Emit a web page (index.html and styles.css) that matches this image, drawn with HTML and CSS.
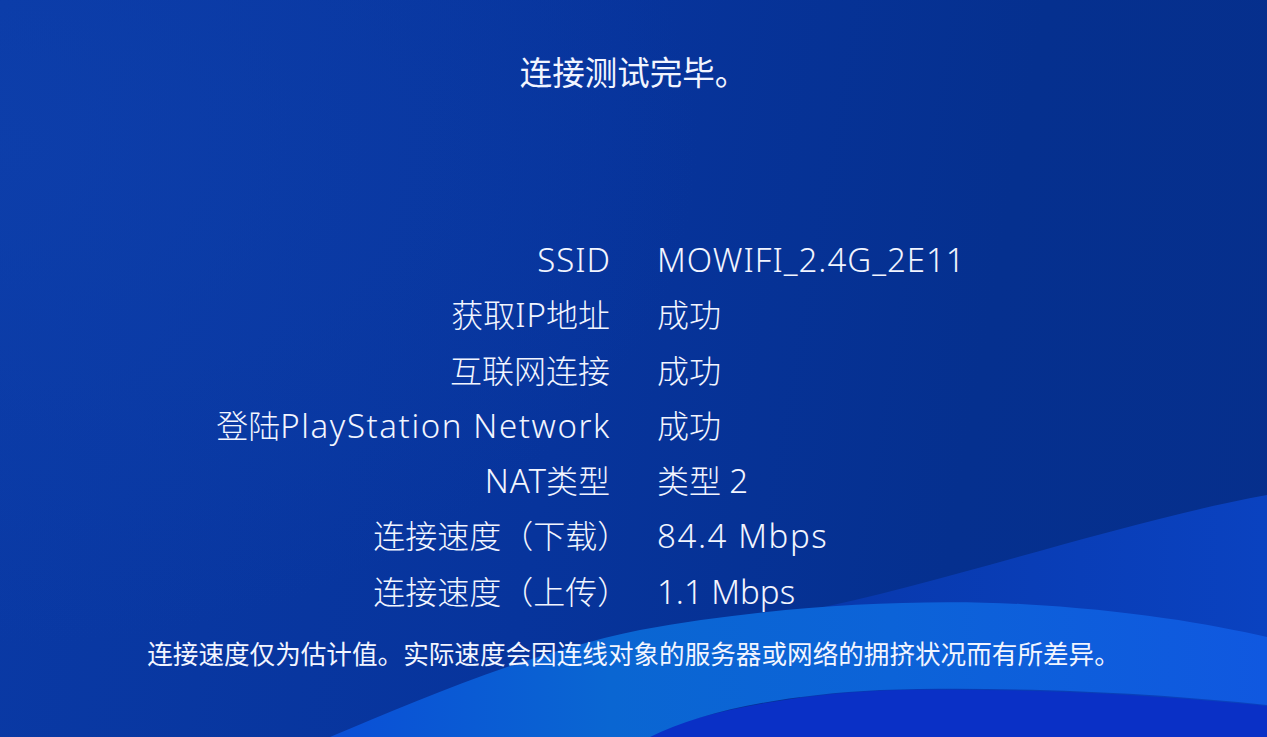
FILE: index.html
```html
<!DOCTYPE html>
<html lang="zh-CN">
<head>
<meta charset="utf-8">
<title>连接测试</title>
<link rel="stylesheet" href="styles.css">
</head>
<body>
<div class="screen">
  <svg class="bg" viewBox="0 0 1267 737" preserveAspectRatio="none" aria-hidden="true">
    <defs>
      <linearGradient id="mid" x1="0" y1="0" x2="1" y2="0">
        <stop offset="0" stop-color="#0838ac"/>
        <stop offset="1" stop-color="#0a42c0"/>
      </linearGradient>
      <linearGradient id="light" x1="0" y1="0" x2="1" y2="0">
        <stop offset="0" stop-color="#0a4fd6"/>
        <stop offset="0.3" stop-color="#0a66d2"/>
        <stop offset="0.6" stop-color="#0c63d8"/>
        <stop offset="1" stop-color="#1058e0"/>
      </linearGradient>
    </defs>
    <path d="M800 612 C950 582 1120 522 1267 495 L1267 737 L800 737 Z" fill="url(#mid)"/>
    <path d="M640 737 C720 705 820 692 900 690 C1030 688 1160 695 1267 706 L1267 737 Z" fill="#0a30c6"/>
    <path d="M330 737 C420 700 520 655 640 630 C760 608 900 598 1020 604 C1130 610 1210 624 1267 637 L1267 705 C1150 692 1000 686 880 690 C780 695 700 712 650 737 Z" fill="url(#light)"/>
  </svg>

  <main class="content">
    <h1 class="title">连接测试完毕。</h1>
    <dl class="results">
      <dt><span class="en">SSID</span></dt><dd><span class="en">MOWIFI_2.4G_2E11</span></dd>
      <dt>获取<span class="en">IP</span>地址</dt><dd>成功</dd>
      <dt>互联网连接</dt><dd>成功</dd>
      <dt>登陆<span class="en wide">PlayStation Network</span></dt><dd>成功</dd>
      <dt><span class="en">NAT</span>类型</dt><dd>类型 <span class="en">2</span></dd>
      <dt>连接速度（下载<span class="close">）</span></dt><dd><span class="en wide">84.4 Mbps</span></dd>
      <dt>连接速度（上传<span class="close">）</span></dt><dd><span class="en narrow">1.1 Mbps</span></dd>
    </dl>
    <p class="note">连接速度仅为估计值。实际速度会因连线对象的服务器或网络的拥挤状况而有所差异。</p>
  </main>
</div>
</body>
</html>
```

FILE: styles.css
```css
* { box-sizing: border-box; }

html, body {
  margin: 0;
  padding: 0;
  width: 1267px;
  height: 737px;
  overflow: hidden;
}

body {
  font-family: "Noto Sans", "Noto Sans CJK SC", sans-serif;
  color: #f2f5ff;
  background: #07349c;
}

.screen {
  position: relative;
  width: 1267px;
  height: 737px;
  overflow: hidden;
  background:
    radial-gradient(ellipse 700px 500px at 0% 20%, rgba(14, 64, 172, 0.7), rgba(14, 64, 172, 0) 100%),
    linear-gradient(100deg, #0a3aa6 0%, #07349c 45%, #05308f 75%, #062f8c 100%);
}

.bg {
  position: absolute;
  left: 0;
  top: 0;
  width: 1267px;
  height: 737px;
  z-index: 0;
}

.content {
  position: relative;
  z-index: 1;
  display: flex;
  flex-direction: column;
  align-items: center;
}

.title {
  margin: 53px 0 0;
  font-size: 32.5px;
  line-height: 40px;
  font-weight: 400;
  text-align: center;
}

.results {
  align-self: stretch;
  margin: 139px 0 0;
  display: grid;
  grid-template-columns: 610px 1fr;
  column-gap: 47px;
  font-size: 32px;
  line-height: 55.3px;
  font-weight: 300;
}

.results dt {
  text-align: right;
  white-space: nowrap;
}

.results dd {
  margin: 0;
  white-space: nowrap;
}

.en {
  font-size: 33px;
  letter-spacing: 1px;
}

.en.wide {
  letter-spacing: 1.6px;
}

.en.narrow {
  letter-spacing: 0;
}

.results dt .en:last-child {
  margin-right: -1px;
}

.close {
  display: inline-block;
  margin-right: -0.6em;
}

.note {
  margin: 19px 0 0;
  font-size: 25.6px;
  line-height: 34px;
  font-weight: 400;
  text-align: center;
  white-space: nowrap;
}
```
